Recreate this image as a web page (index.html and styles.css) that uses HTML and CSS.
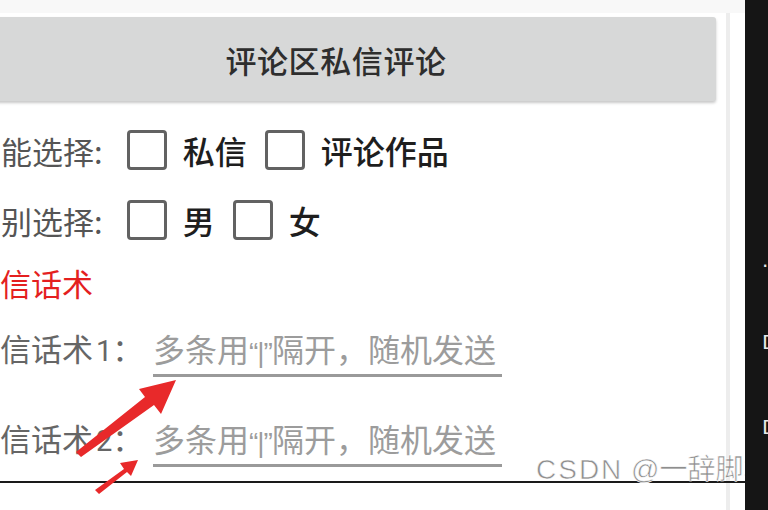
FILE: index.html
```html
<!DOCTYPE html>
<html lang="zh">
<head>
<meta charset="utf-8">
<link rel="stylesheet" href="styles.css">
</head>
<body>
<div class="screen">
  <div class="phone">
    <div class="statusband"></div>
    <div class="app">
      <div class="btn">评论区私信评论</div>
      <div class="row row-first">
        <span class="label">功能选择:</span>
        <span class="check"></span><span class="opt">私信</span>
        <span class="check"></span><span class="opt">评论作品</span>
      </div>
      <div class="row row-second">
        <span class="label">性别选择:</span>
        <span class="check"></span><span class="opt">男</span>
        <span class="check"></span><span class="opt">女</span>
      </div>
      <div class="heading">私信话术</div>
      <div class="field field-first">
        <span class="flabel">私信话术<span class="num">1</span>：</span>
        <span class="input">多条用<span class="q">“|”</span>隔开，随机发送</span>
      </div>
      <div class="field field-second">
        <span class="flabel">私信话术<span class="num">2</span>：</span>
        <span class="input">多条用<span class="q">“|”</span>隔开，随机发送</span>
      </div>
    </div>
  </div>
  <div class="dark">
    <span class="g g-dot">·</span>
    <span class="g g-b1">D</span>
    <span class="g g-b2">D</span>
  </div>
</div>
<div class="hline"></div>
<div class="watermark"><span class="wm-latin">CSDN</span> @一辞脚本</div>
<svg class="arrows" width="768" height="510" viewBox="0 0 768 510">
  <path d="M76 452 L145 397 L139 389 L176 380 L161 414 L154 405 L81 457 Z" fill="#e8292a"/>
  <path d="M95 490 L124 469 L120 463 L138 460 L131 476 L127 472 L99 494 Z" fill="#e8292a"/>
</svg>
</body>
</html>
```
FILE: styles.css
```css
html, body {
  margin: 0;
  padding: 0;
  width: 768px;
  height: 510px;
  overflow: hidden;
  background: #ffffff;
  font-family: "Noto Sans CJK SC", "Noto Sans", sans-serif;
}

.screen {
  display: flex;
  width: 768px;
  height: 510px;
}

.phone {
  width: 745px;
  flex: none;
  background: #ffffff;
  overflow: hidden;
}

.statusband {
  height: 13px;
  background: #f8f8f8;
}

.app {
  width: 726px;
  height: 497px;
  border-right: 4px solid #ededed;
  display: flex;
  flex-direction: column;
  overflow: hidden;
}

.btn {
  margin-top: 4px;
  margin-left: -44px;
  width: 760px;
  height: 84px;
  background: #d7d8d8;
  border-radius: 3px;
  box-shadow: 0 2px 3px rgba(0, 0, 0, 0.22);
  display: flex;
  align-items: center;
  justify-content: center;
  font-size: 31px;
  font-weight: 500;
  letter-spacing: 0.6px;
  color: #2e2e2e;
  flex: none;
}

.row {
  display: flex;
  align-items: center;
  height: 40px;
  margin-left: -30px;
  flex: none;
  font-size: 31px;
}

.row-first { margin-top: 29px; }
.row-second { margin-top: 30px; }

.label {
  color: #555555;
  margin-right: 24px;
  white-space: nowrap;
}

.check {
  width: 34px;
  height: 34px;
  border: 3px solid #626262;
  border-radius: 4px;
  flex: none;
  margin-right: 16px;
}

.opt {
  color: #1e1e1e;
  font-size: 32px;
  font-weight: 500;
  margin-right: 18px;
  white-space: nowrap;
}

.heading {
  margin-top: 23px;
  margin-left: -31px;
  height: 40px;
  line-height: 40px;
  font-size: 31px;
  color: #e41f1f;
  flex: none;
}

.field {
  display: flex;
  align-items: flex-start;
  margin-left: -31px;
  flex: none;
}

.field-first { margin-top: 25px; }
.field-second { margin-top: 41px; }

.flabel {
  width: 184px;
  flex: none;
  font-size: 31px;
  line-height: 40px;
  color: #666666;
  white-space: nowrap;
}

.num {
  font-family: "Roboto", sans-serif;
  font-size: 29px;
  margin-left: 3px;
}

.input {
  width: 349px;
  font-size: 32px;
  line-height: 40px;
  color: #9c9c9c;
  padding-bottom: 1px;
  border-bottom: 3px solid #9a9a9a;
  white-space: nowrap;
  overflow: hidden;
}

.q {
  font-family: "Liberation Sans", sans-serif;
  font-size: 28px;
  letter-spacing: -1px;
}

.dark {
  position: relative;
  z-index: 2;
  flex: 1;
  background: #151515;
  display: flex;
  flex-direction: column;
  overflow: hidden;
  padding-left: 17px;
}

.g {
  color: #e8e8e8;
  font-family: "DejaVu Sans", sans-serif;
  line-height: 20px;
  height: 20px;
  font-size: 20px;
}

.g-dot { margin-top: 256px; }
.g-b1 { margin-top: 56px; }
.g-b2 { margin-top: 65px; }

.hline {
  position: absolute;
  left: 0;
  top: 481px;
  width: 745px;
  height: 2px;
  background: #1a1a1a;
}

.watermark {
  position: absolute;
  z-index: 1;
  left: 536px;
  top: 454px;
  font-family: "Liberation Sans", "Noto Sans CJK SC", sans-serif;
  font-size: 28px;
  line-height: 32px;
  color: #8e8e8e;
  -webkit-text-stroke: 0.6px #ffffff;
  text-shadow: 0 0 1px #ffffff;
  white-space: nowrap;
}

.wm-latin {
  letter-spacing: 2px;
}

.arrows {
  position: absolute;
  z-index: 3;
  left: 0;
  top: 0;
  pointer-events: none;
}
```
